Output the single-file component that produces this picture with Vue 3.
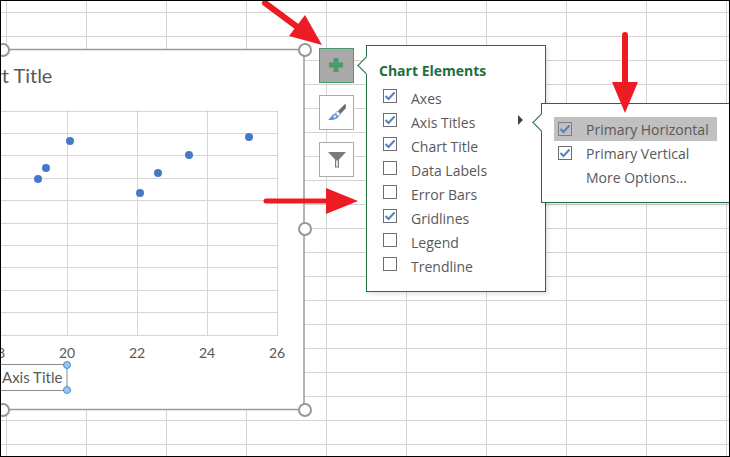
<script setup>
const vLines = [6, 86, 166, 246, 326, 406, 486, 566, 646, 726]
const hLines = Array.from({ length: 19 }, (_, i) => 12 + 24 * i)
const plotH = Array.from({ length: 11 }, (_, i) => 110.5 + 22.4 * i)
const plotV = [-3, 67, 137, 207, 277]
const points = [[70, 141], [46, 168], [38, 179], [140, 193], [158, 173], [189, 155], [249, 137]]
const ticks = [[-3, '18'], [67, '20'], [137, '22'], [207, '24'], [277, '26']]
const handles = [[3, 50], [305, 50], [305, 229], [305, 410], [3, 410]]
const elements = [
  { label: 'Axes', on: true },
  { label: 'Axis Titles', on: true, more: true },
  { label: 'Chart Title', on: true },
  { label: 'Data Labels', on: false },
  { label: 'Error Bars', on: false },
  { label: 'Gridlines', on: true },
  { label: 'Legend', on: false },
  { label: 'Trendline', on: false }
]
</script>

<template>
  <div class="stage">
    <svg class="canvas" width="730" height="457" viewBox="0 0 730 457">
      <g stroke="#d4d4d4" stroke-width="1">
        <line v-for="x in vLines" :key="'v' + x" :x1="x + 0.5" y1="0" :x2="x + 0.5" y2="457" />
        <line v-for="y in hLines" :key="'h' + y" x1="0" :y1="y + 0.5" x2="730" :y2="y + 0.5" />
      </g>
      <rect x="-4" y="49.5" width="308" height="360" fill="#fff" stroke="#9a9a9a" stroke-width="1.5" />
      <g stroke="#d6d6d6" stroke-width="1">
        <line v-for="y in plotH" :key="'p' + y" x1="0" :y1="Math.round(y) + 0.5" x2="278" :y2="Math.round(y) + 0.5" />
        <line v-for="x in plotV" :key="'q' + x" :x1="x + 0.5" y1="110" :x2="x + 0.5" y2="335" />
      </g>
      <circle v-for="p in points" :key="p[0]" :cx="p[0]" :cy="p[1]" r="4" fill="#4678c8" />
      <text x="-40" y="83" class="chart-title">Chart Title</text>
      <text v-for="t in ticks" :key="t[1]" :x="t[0]" y="358" class="tick">{{ t[1] }}</text>
      <rect x="-8" y="364.5" width="75" height="26" fill="#fff" stroke="#8c8c8c" />
      <text x="2" y="383" class="axis-title">Axis Title</text>
      <circle cx="67" cy="365" r="3.5" fill="#9dc3e6" stroke="#3f94de" stroke-width="1" />
      <circle cx="67" cy="390" r="3.5" fill="#9dc3e6" stroke="#3f94de" stroke-width="1" />
      <circle v-for="h in handles" :key="h.join()" :cx="h[0]" :cy="h[1]" r="6" fill="#fff" stroke="#979797" stroke-width="2" />
    </svg>

    <div class="tools">
      <button class="tool active">
        <svg width="14" height="14" viewBox="0 0 14 14"><path d="M4.500 0h5v4.500h4.500v5h-4.500v4.500h-5v-4.500h-4.500v-5h4.500z" fill="#4e9a70" /></svg>
      </button>
      <button class="tool">
        <svg width="24" height="24" viewBox="0 0 24 24">
          <path d="M20.500 2.500 L21 7 L15.500 13 L12.500 10.500 Z" fill="#6e6e6e" />
          <path d="M10.500 12 L12.500 10 L15.500 13 L13.500 15.500 Z" fill="#fff" stroke="#7f8ea0" stroke-width="0.8" />
          <path d="M3 18.800 C5.500 17.500 6.500 14 9.500 12.500 C11.500 13.500 13 15 13.500 16 C11.500 18.500 7.500 19.500 3 18.800 Z" fill="#5b8fd0" />
          <circle cx="9.800" cy="15.500" r="1.500" fill="#d5e3f4" />
        </svg>
      </button>
      <button class="tool">
        <svg width="20" height="20" viewBox="0 0 20 20"><path d="M1 2 H19 L12 9.500 V17.500 H8 V9.500 Z" fill="#7a7a7a" /><path d="M9.200 10.500 h1.600 v6 h-1.600 z" fill="#fff" /></svg>
      </button>
    </div>

    <section class="panel elements">
      <span class="beak"></span>
      <h3>Chart Elements</h3>
      <ul>
        <li v-for="e in elements" :key="e.label">
          <span class="box">
            <svg v-if="e.on" width="12" height="12" viewBox="0 0 12 12"><path d="M1.500 6 L4.500 9 L10.500 2.500" fill="none" stroke="#4d82c8" stroke-width="2" /></svg>
          </span>
          <span class="label">{{ e.label }}</span>
          <i v-if="e.more" class="caret"></i>
        </li>
      </ul>
    </section>

    <section class="panel sub">
      <span class="beak"></span>
      <ul>
        <li class="hot">
          <span class="box">
            <svg width="12" height="12" viewBox="0 0 12 12"><path d="M1.500 6 L4.500 9 L10.500 2.500" fill="none" stroke="#4d82c8" stroke-width="2" /></svg>
          </span>
          <span class="label">Primary Horizontal</span>
        </li>
        <li>
          <span class="box">
            <svg width="12" height="12" viewBox="0 0 12 12"><path d="M1.500 6 L4.500 9 L10.500 2.500" fill="none" stroke="#4d82c8" stroke-width="2" /></svg>
          </span>
          <span class="label">Primary Vertical</span>
        </li>
        <li><span class="nobox"></span><span class="label">More Options...</span></li>
      </ul>
    </section>

    <svg class="arrows" width="730" height="457" viewBox="0 0 730 457">
      <g fill="#ed1c24" stroke="#ed1c24" stroke-linecap="round">
        <line x1="265" y1="3" x2="300" y2="29" stroke-width="6" />
        <polygon points="322,45 289,36 305,15" stroke-width="0" />
        <line x1="266" y1="201" x2="330" y2="201" stroke-width="5" />
        <polygon points="358,201 326,188 326,214" stroke-width="0" />
        <line x1="625" y1="35" x2="625" y2="88" stroke-width="6" />
        <polygon points="625,113 612,82 638,82" stroke-width="0" />
      </g>
    </svg>

    <div class="frame"></div>
  </div>
</template>

<style>
html, body { margin: 0; background: #fff; }
</style>

<style scoped>
.stage {
  position: relative;
  width: 730px;
  height: 457px;
  overflow: hidden;
  background: #fff;
  font-family: "Open Sans", "Liberation Sans", sans-serif;
  color: #595959;
}
.canvas, .arrows { position: absolute; left: 0; top: 0; }
.arrows { pointer-events: none; }
.chart-title { font: 20px Lato, sans-serif; fill: #595959; }
.tick { font: 14px Lato, sans-serif; fill: #595959; text-anchor: middle; }
.axis-title { font: 15px Lato, sans-serif; fill: #595959; }
.frame {
  position: absolute;
  inset: 0;
  border: 1px solid #000;
  pointer-events: none;
}
.tools {
  position: absolute;
  left: 319px;
  top: 48px;
  display: flex;
  flex-direction: column;
  gap: 12px;
}
.tool {
  width: 35px;
  height: 35px;
  padding: 0;
  display: flex;
  align-items: center;
  justify-content: center;
  background: #fff;
  border: 1px solid #ababab;
}
.tool.active {
  background: #a9a9a9;
  border-color: #4a9a70;
  padding: 0 1px 1px 0;
}
.panel {
  position: absolute;
  background: #fff;
  border: 1px solid #1e6e42;
  box-shadow: 2px 2px 4px rgba(0, 0, 0, 0.12);
  box-sizing: border-box;
}
.beak {
  position: absolute;
  box-sizing: border-box;
  width: 13px;
  height: 13px;
  left: -7.5px;
  background: #fff;
  border-left: 1px solid #1e6e42;
  border-bottom: 1px solid #1e6e42;
  transform: rotate(45deg);
}
.elements {
  left: 366px;
  top: 45px;
  width: 180px;
  height: 247px;
  padding: 16px 12px 0 16px;
}
.elements .beak { top: 12.5px; }
.elements .label { position: relative; top: 2px; }
h3 {
  margin: 0 0 4px -4px;
  font-size: 14px;
  line-height: 18px;
  font-weight: 700;
  color: #1e6e42;
}
ul { margin: 0; padding: 0; list-style: none; }
li {
  position: relative;
  display: flex;
  align-items: center;
  height: 24px;
  font-size: 14px;
  color: #595959;
}
.box {
  flex: none;
  width: 12px;
  height: 12px;
  margin-right: 14px;
  border: 1px solid #6e6e6e;
  background: #fff;
  display: flex;
}
.nobox { flex: none; width: 14px; margin-right: 14px; }
.caret {
  position: absolute;
  left: 135px;
  top: 7px;
  border-left: 5px solid #404040;
  border-top: 5px solid transparent;
  border-bottom: 5px solid transparent;
}
.sub {
  left: 541px;
  top: 103px;
  width: 200px;
  height: 100px;
  padding: 13px 0 0 12px;
}
.sub .beak { top: 11.5px; }
.sub li { width: 163px; padding-left: 4px; box-sizing: border-box; }
.sub .hot { background: #c0c0c0; }
.sub .hot .box { background: #c0c0c0; border-color: #7f7f7f; }
</style>
